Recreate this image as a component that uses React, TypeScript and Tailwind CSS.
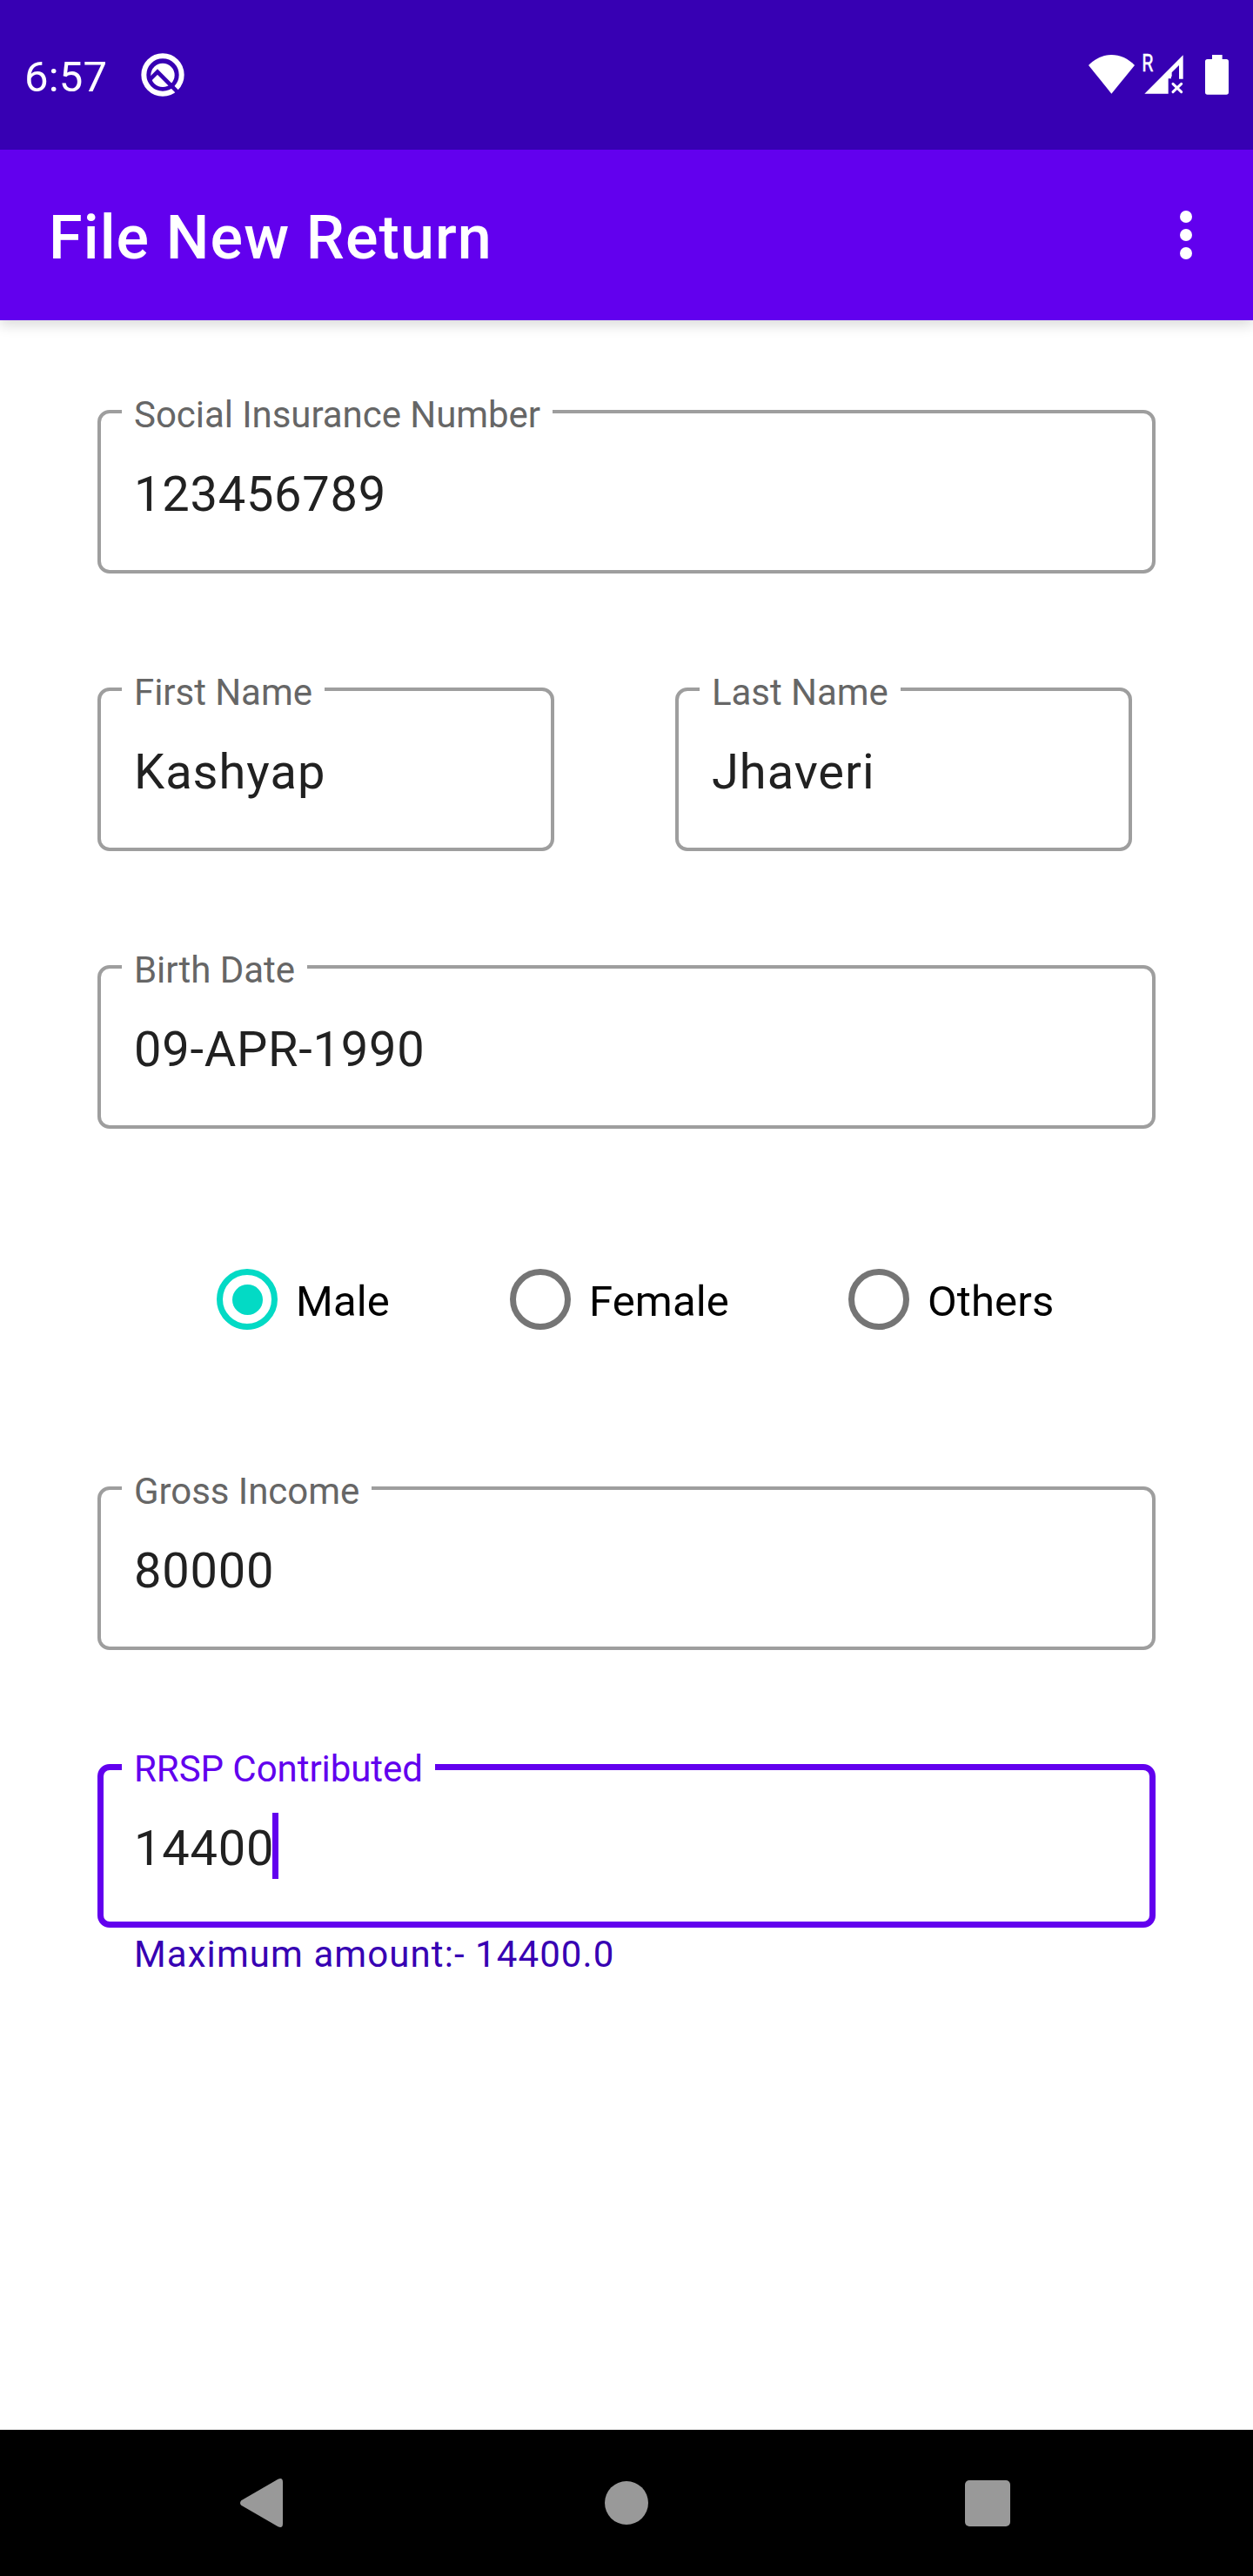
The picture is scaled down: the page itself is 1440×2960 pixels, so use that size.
import type { ReactNode } from "react";

type FieldProps = {
  label: string;
  value: string;
  focused?: boolean;
  className?: string;
  valueClassName?: string;
};

function OutlinedField({
  label,
  value,
  focused = false,
  className = "",
  valueClassName = "tracking-[0.75px]",
}: FieldProps) {
  return (
    <div
      className={`relative flex h-[188px] items-center rounded-[14px] ${
        focused ? "border-[7px] border-[#6200EE] pl-[35px]" : "border-4 border-[#9e9e9e] pl-[38px]"
      } ${className}`}
    >
      <label
        className={`absolute whitespace-nowrap bg-white px-[14px] text-[42px] leading-[49px] tracking-[-0.05px] ${
          focused ? "-top-[26px] left-[21px] text-[#6200EE]" : "-top-[23px] left-6 text-[#666666]"
        }`}
      >
        {label}
      </label>
      <div className="flex items-center">
        <span className={`pt-[6px] text-[56px] leading-[66px] text-[#212121] ${valueClassName}`}>{value}</span>
        {focused && <span className="-ml-[2px] h-[76px] w-[7px] bg-[#6200EE]" />}
      </div>
    </div>
  );
}

function RadioOption({ label, checked = false, className = "" }: { label: string; checked?: boolean; className?: string }) {
  return (
    <div className={`flex items-center ${className}`}>
      <span
        className={`mx-[21px] flex size-[70px] shrink-0 items-center justify-center rounded-full border-[7px] ${
          checked ? "border-[#03DAC5]" : "border-[#757575]"
        }`}
      >
        {checked && <span className="size-[35px] rounded-full bg-[#03DAC5]" />}
      </span>
      <span className="pt-[5px] text-[49px] leading-[58px] tracking-[0.12px] text-black">{label}</span>
    </div>
  );
}

function Glyph({ viewBox, className, children }: { viewBox: string; className: string; children: ReactNode }) {
  return (
    <svg viewBox={viewBox} className={`shrink-0 ${className}`} fill="white">
      {children}
    </svg>
  );
}

function StatusBar() {
  return (
    <header className="relative z-10 flex h-[172px] items-center bg-[#3700B3] pl-7 pr-[27px] text-white">
      <span className="w-[95px] pt-[5px] text-[49px] leading-[58px] tracking-[0.2px]">6:57</span>
      <Glyph viewBox="484 60 156 156" className="ml-[38px] size-[52px]">
        <circle cx="562" cy="138" r="65" fill="none" stroke="white" strokeWidth="18" />
        <circle cx="562" cy="139" r="41" />
        <path d="M514 158 L544 128 L618 202" fill="none" stroke="#3700B3" strokeWidth="14" />
      </Glyph>
      <div className="ml-auto flex items-center">
        <Glyph viewBox="60 60 165 156" className="h-[52px] w-[55px]">
          <path d="M142 203 L63 105 C85 82 113 69 142 69 C171 69 200 82 222 105 Z" />
        </Glyph>
        <Glyph viewBox="237 36 156 204" className="ml-1 h-[68px] w-[52px]">
          <text
            transform="translate(247 126) scale(0.76 1)"
            fontSize="84"
            fontFamily="Roboto, sans-serif"
            stroke="white"
            strokeWidth="1.5"
          >
            R
          </text>
          <path d="M256 203 L389 70 V152 H375 V105 L350 130 V143 L348 145 V151 H338 V203 Z" />
          <path d="M354 169 L383 197 M383 169 L354 197" stroke="white" strokeWidth="9" strokeLinecap="round" />
        </Glyph>
        <Glyph viewBox="462 60 87 156" className="ml-[23px] h-[52px] w-[29px]">
          <path d="M489 69 H524 V84 H538 Q546 84 546 92 V198 Q546 206 538 206 H473 Q465 206 465 198 V92 Q465 84 473 84 H489 Z" />
        </Glyph>
      </div>
    </header>
  );
}

function AppBar() {
  return (
    <div className="flex h-[196px] items-center justify-between bg-[#6200EE] pl-14 pr-[70px] text-white shadow-[0_6px_14px_rgba(0,0,0,0.14)]">
      <h1 className="pt-[6px] text-[70px] font-medium leading-[82px] tracking-[1.12px]">File New Return</h1>
      <div className="flex flex-col gap-[7px]">
        <span className="size-[14px] rounded-full bg-white" />
        <span className="size-[14px] rounded-full bg-white" />
        <span className="size-[14px] rounded-full bg-white" />
      </div>
    </div>
  );
}

function NavigationBar() {
  return (
    <nav className="flex h-[168px] items-center bg-black pl-[276px]">
      <svg viewBox="0 0 49 56" className="h-14 w-[49px]" fill="#999999">
        <path d="M1.2 25.2 L43.5 0.8 Q49 -1.5 49 4 V52 Q49 57.5 43.5 55.2 L1.2 30.8 Q-1.2 28 1.2 25.2 Z" />
      </svg>
      <span className="ml-[370px] size-[50px] rounded-full bg-[#999999]" />
      <span className="ml-[364px] h-[53px] w-[52px] rounded-[5px] bg-[#999999]" />
    </nav>
  );
}

export default function App() {
  return (
    <div className="flex h-[2960px] w-[1440px] flex-col overflow-hidden bg-white font-[Roboto,sans-serif]">
      <StatusBar />
      <AppBar />
      <main className="flex-1 px-28 pt-[103px]">
        <OutlinedField label="Social Insurance Number" value="123456789" />
        <div className="mt-[131px] flex gap-[139px]">
          <OutlinedField label="First Name" value="Kashyap" className="w-[525px]" valueClassName="tracking-[1px]" />
          <OutlinedField label="Last Name" value="Jhaveri" className="w-[525px]" valueClassName="tracking-[0.95px]" />
        </div>
        <OutlinedField label="Birth Date" value="09-APR-1990" className="mt-[131px]" />
        <div className="mt-[161px] flex h-[70px] items-center pl-[116px]">
          <RadioOption label="Male" checked className="w-[337px]" />
          <RadioOption label="Female" className="w-[389px]" />
          <RadioOption label="Others" />
        </div>
        <OutlinedField label="Gross Income" value="80000" className="mt-[180px]" />
        <OutlinedField label="RRSP Contributed" value="14400" focused className="mt-[131px]" />
        <p className="ml-[42px] mt-[6px] text-[42px] leading-[49px] tracking-[1.08px] text-[#3700B3]">
          Maximum amount:- 14400.0
        </p>
      </main>
      <NavigationBar />
    </div>
  );
}
